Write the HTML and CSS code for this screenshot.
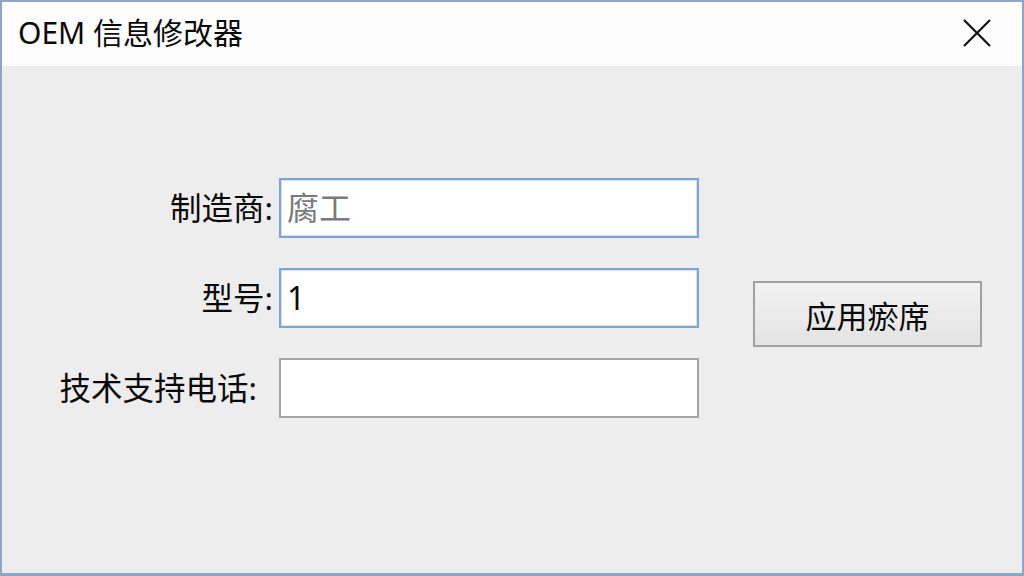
FILE: index.html
```html
<!DOCTYPE html>
<html lang="zh-CN">
<head>
<meta charset="utf-8">
<title>OEM 信息修改器</title>
<link rel="stylesheet" href="styles.css">
</head>
<body>
<div class="window">
  <div class="titlebar">
    <span class="title">OEM 信息修改器</span>
    <span class="close" aria-label="关闭">
      <svg width="28" height="28" viewBox="0 0 28 28"><path d="M1 1 L27 27 M27 1 L1 27" stroke="#111" stroke-width="2.2" fill="none"/></svg>
    </span>
  </div>
  <div class="content">
    <div class="form">
      <label class="label">制造商:</label>
      <div class="field field-focus"><span class="value value-muted">腐工</span></div>
      <div class="spacer"></div>

      <label class="label">型号:</label>
      <div class="field field-focus"><span class="value">1</span></div>
      <div class="btn-cell"><button class="btn">应用瘀席</button></div>

      <label class="label label-wide">技术支持电话:</label>
      <div class="field"></div>
      <div class="spacer"></div>
    </div>
  </div>
</div>
</body>
</html>
```
FILE: styles.css
```css
html, body {
  margin: 0;
  padding: 0;
}
body {
  width: 1024px;
  height: 576px;
  overflow: hidden;
  font-family: "Noto Sans", "Noto Sans CJK SC", sans-serif;
  color: #0a0a0a;
}
.window {
  box-sizing: border-box;
  width: 1024px;
  height: 576px;
  border: 2px solid #8aa6c9;
  border-bottom-width: 3px;
  background: #ededed;
  display: flex;
  flex-direction: column;
}
.titlebar {
  height: 64px;
  background: #fdfdfd;
  display: flex;
  align-items: center;
  justify-content: space-between;
  padding: 0 31px 0 16px;
  flex-shrink: 0;
}
.title {
  font-size: 30px;
  line-height: 1;
  color: #0a0a0a;
  margin-top: -2px;
}
.close {
  display: flex;
  width: 28px;
  height: 28px;
  margin-top: -2px;
}
.content {
  flex: 1;
  padding-top: 112px;
}
.form {
  display: grid;
  grid-template-columns: 237px 420px 240px;
  grid-auto-rows: 60px;
  row-gap: 30px;
  padding-left: 40px;
}
.label {
  font-size: 31.5px;
  line-height: 1;
  text-align: right;
  align-self: center;
  padding-right: 6px;
  color: #0a0a0a;
  white-space: nowrap;
}
.label-wide {
  padding-right: 22px;
}
.field {
  box-sizing: border-box;
  height: 60px;
  background: #fff;
  border: 2px solid #a3a3a3;
  display: flex;
  align-items: center;
  padding-left: 6px;
}
.field-focus {
  border-color: #7ea3d4;
  box-shadow: inset 0 0 0 1px #d4e2f3;
}
.value {
  font-size: 32px;
  line-height: 1;
  color: #0a0a0a;
}
.value-muted {
  color: #7a7a7a;
}
.btn-cell {
  padding-left: 54px;
}
.btn {
  box-sizing: border-box;
  margin-top: 13px;
  width: 229px;
  height: 66px;
  border: 2px solid #a0a0a0;
  background: linear-gradient(#f2f2f2, #e3e3e3);
  font-family: "Noto Sans", "Noto Sans CJK SC", sans-serif;
  font-size: 31px;
  color: #0a0a0a;
  padding: 0;
}
```
